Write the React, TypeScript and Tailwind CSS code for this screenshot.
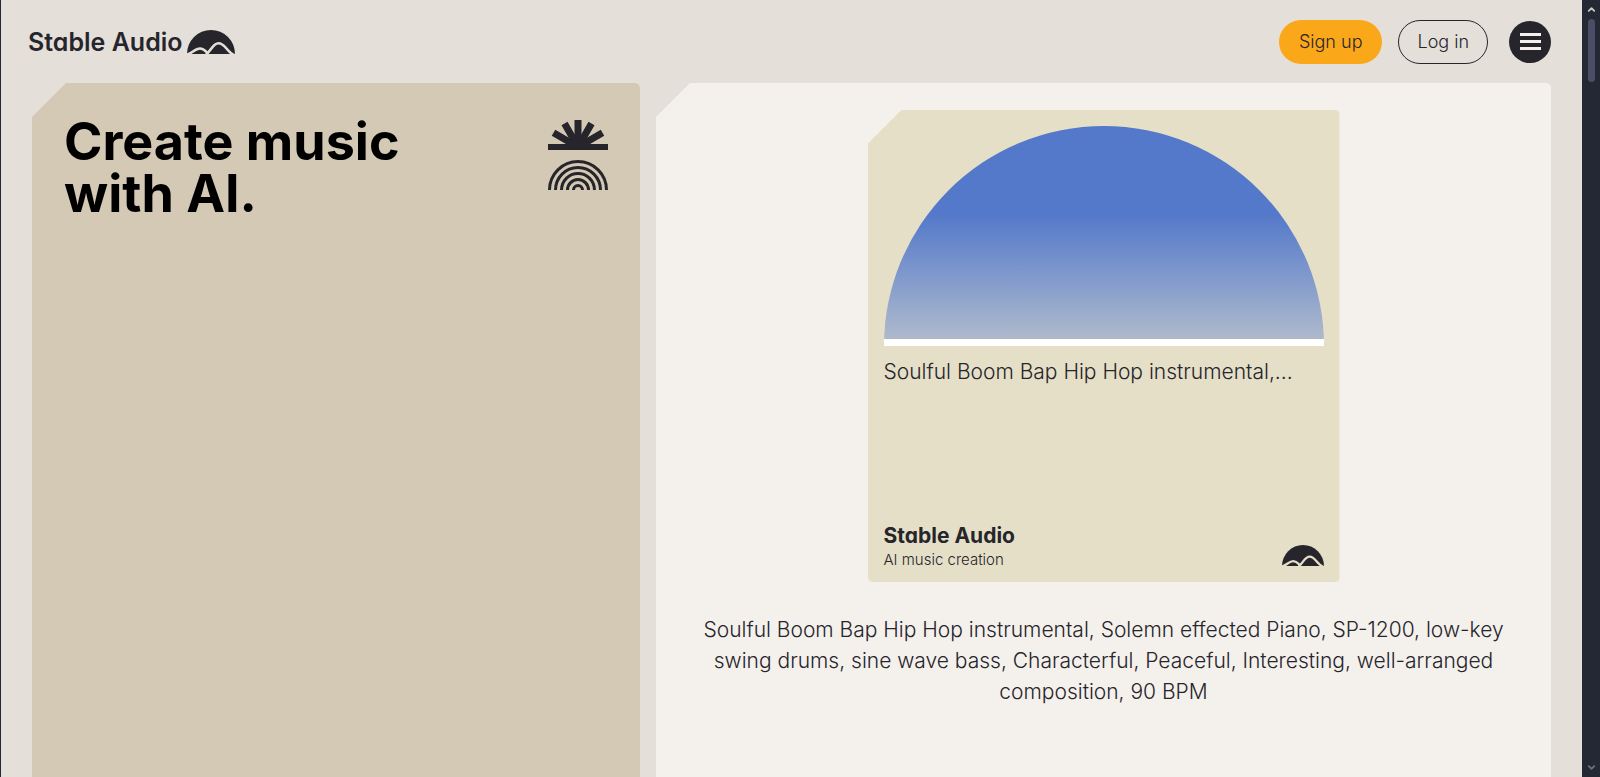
import { ChevronDown, ChevronUp } from 'lucide-react'

function HillsIcon({ className }: { className?: string }) {
  return (
    <svg viewBox="0 0 48 24" className={className} aria-hidden="true">
      <path d="M0 24a24 24 0 0 1 48 0z" fill="#26252c" stroke="none" />
      <g fill="none" strokeWidth="2.6">
        <path d="M0 24.500C5 23.500 8 18.500 13 18.500C16.500 18.500 18 20.500 20.500 23" />
        <path d="M19 24.500C24 21 26 13.300 31.500 13.300C38 13.300 40 22 47 25" />
      </g>
    </svg>
  )
}

function SunIcon() {
  return (
    <svg viewBox="0 0 60 30" className="w-[60px]" aria-hidden="true">
      <g stroke="#26252c" strokeWidth="7">
        <path d="M0 27h60" strokeWidth="6" />
        <path d="M30 27V0" />
        <path d="M30 27L16.500 3.500M30 27L43.500 3.500" />
        <path d="M30 27L5.500 12.800M30 27L54.500 12.800" />
      </g>
    </svg>
  )
}

function RainbowIcon() {
  return (
    <svg viewBox="0 0 60 30" className="mt-[10px] w-[60px]" aria-hidden="true">
      <g fill="none" stroke="#26252c" strokeWidth="3">
        {[28.5, 22.5, 16.5, 10.5, 4.5].map((r) => (
          <circle key={r} cx="30" cy="30" r={r} />
        ))}
      </g>
    </svg>
  )
}

function Header() {
  return (
    <header className="flex h-[83px] items-center justify-between pr-[31px] pl-[27px]">
      <a href="#" className="flex items-center gap-1">
        <span className="text-[25px] leading-8 font-semibold [font-feature-settings:'cv11']">
          Stable Audio
        </span>
        <HillsIcon className="w-12 stroke-[#e4e0d9]" />
      </a>
      <nav className="flex items-center">
        <button className="h-11 rounded-full bg-[#faa819] px-5 text-[18px] font-light">
          Sign up
        </button>
        <button className="ml-4 h-11 rounded-full border border-[#26252c] px-[18px] text-[18px] font-light">
          Log in
        </button>
        <button
          aria-label="Open menu"
          className="ml-[21px] flex size-[42px] flex-col items-center justify-center gap-1 rounded-full bg-[#26252c]"
        >
          <span className="h-[3px] w-[21px] bg-[#f4f0eb]" />
          <span className="h-[3px] w-[21px] bg-[#f4f0eb]" />
          <span className="h-[3px] w-[21px] bg-[#f4f0eb]" />
        </button>
      </nav>
    </header>
  )
}

function TrackCard() {
  return (
    <article className="flex aspect-square w-full max-w-[472px] flex-col rounded-[5px] bg-[#e5dfc7] px-4 pt-4 pb-3 [clip-path:polygon(34px_0,100%_0,100%_100%,0_100%,0_34px)]">
      <div className="aspect-[2/1] w-full overflow-hidden rounded-t-full bg-linear-to-b from-[#5478ca] from-40% to-[#b4bccb]" />
      <div className="-mt-[7px] h-[7px] bg-white" />
      <p className="mt-[10px] truncate text-[21px] leading-8 font-light">
        Soulful Boom Bap Hip Hop instrumental,...
      </p>
      <div className="mt-auto flex items-end justify-between">
        <div>
          <p className="text-[21px] leading-7 font-bold [font-feature-settings:'cv11']">
            Stable Audio
          </p>
          <p className="text-[15px] leading-5 font-light">AI music creation</p>
        </div>
        <HillsIcon className="mb-1 w-[42px] stroke-[#e5dfc7]" />
      </div>
    </article>
  )
}

function Scrollbar() {
  return (
    <div className="flex w-[18px] shrink-0 flex-col items-center bg-[#242834] py-1 text-[#c9c9c4]">
      <ChevronUp size={11} strokeWidth={4} />
      <div className="mt-1 h-[63px] w-[7px] rounded-full bg-[#4b4d66]" />
      <ChevronDown size={11} strokeWidth={4} className="mt-auto text-[#70716f]" />
    </div>
  )
}

export default function App() {
  return (
    <div className="flex h-screen overflow-hidden border-l border-[#26283a] bg-[#e4e0d9] font-['Inter',sans-serif] text-[#26252c]">
      <div className="flex min-w-0 flex-1 flex-col">
        <Header />
        <main className="grid flex-1 grid-cols-[608fr_895fr] gap-4 px-[31px]">
          <section className="flex items-start justify-between rounded-t-[5px] bg-[#d4c9b5] px-8 pt-[37px] [clip-path:polygon(34px_0,100%_0,100%_100%,0_100%,0_34px)]">
            <h1 className="-mt-1 text-[52px] leading-[52px] font-bold text-black">
              Create music
              <br />
              with AI.
            </h1>
            <div className="shrink-0">
              <SunIcon />
              <RainbowIcon />
            </div>
          </section>
          <section className="flex flex-col items-center rounded-t-[5px] bg-[#f4f0eb] px-10 pt-[27px] [clip-path:polygon(34px_0,100%_0,100%_100%,0_100%,0_34px)]">
            <TrackCard />
            <p className="mt-8 text-center text-[21px] leading-[31px] font-light">
              Soulful Boom Bap Hip Hop instrumental, Solemn effected Piano, SP-1200, low-key swing
              drums, sine wave bass, Characterful, Peaceful, Interesting, well-arranged composition,
              90 BPM
            </p>
          </section>
        </main>
      </div>
      <Scrollbar />
    </div>
  )
}
